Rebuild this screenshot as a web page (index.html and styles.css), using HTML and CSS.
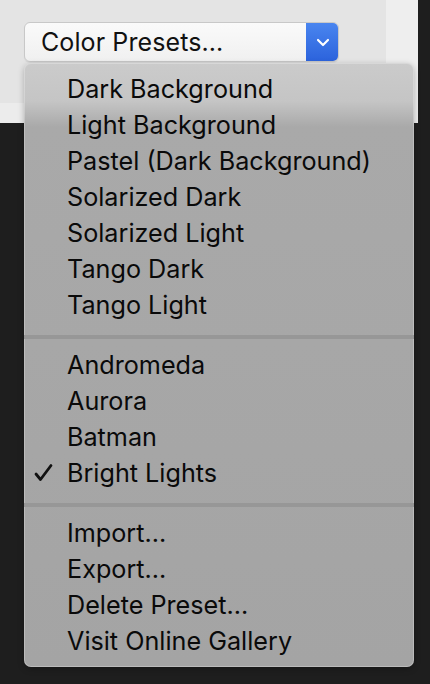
FILE: index.html
```html
<!DOCTYPE html>
<html>
<head>
<meta charset="utf-8">
<link rel="stylesheet" href="styles.css">
</head>
<body>
<div class="stage">
  <div class="panel">
    <div class="panel-main">
      <div class="popup">
        <span class="popup-label">Color Presets...</span>
        <span class="popup-arrow">
          <svg width="14" height="9" viewBox="0 0 14 9"><path d="M2 2 L7 7 L12 2" fill="none" stroke="#fff" stroke-width="2.2" stroke-linecap="round" stroke-linejoin="round"/></svg>
        </span>
      </div>
    </div>
    <div class="panel-side"></div>
  </div>

  <div class="menu">
    <div class="item">Dark Background</div>
    <div class="item">Light Background</div>
    <div class="item">Pastel (Dark Background)</div>
    <div class="item">Solarized Dark</div>
    <div class="item">Solarized Light</div>
    <div class="item">Tango Dark</div>
    <div class="item">Tango Light</div>
    <div class="sep"><div class="sep-line"></div></div>
    <div class="item">Andromeda</div>
    <div class="item">Aurora</div>
    <div class="item">Batman</div>
    <div class="item checked"><svg class="check" width="20" height="20" viewBox="0 0 20 20"><path d="M2 11 L6.5 16.5 L17 2.5" fill="none" stroke="#111" stroke-width="2.8" stroke-linecap="round" stroke-linejoin="round"/></svg>Bright Lights</div>
    <div class="sep"><div class="sep-line"></div></div>
    <div class="item">Import...</div>
    <div class="item">Export...</div>
    <div class="item">Delete Preset...</div>
    <div class="item">Visit Online Gallery</div>
  </div>
</div>
</body>
</html>
```

FILE: styles.css
```css
html, body {
  margin: 0;
  padding: 0;
}
body {
  background: #1e1e1e;
  font-family: Inter, "Liberation Sans", Arial, sans-serif;
  color: #111;
}
.stage {
  position: relative;
  width: 430px;
  height: 684px;
  overflow: hidden;
}
.panel {
  display: flex;
  width: 418px;
  height: 123px;
}
.panel-main {
  flex: 0 0 386px;
  background: linear-gradient(#e4e4e4 0, #e4e4e4 103px, #ececec 103px);
  padding: 22px 0 0 24px;
  box-sizing: border-box;
}
.panel-side {
  flex: 1;
  background: #eeeeee;
}
.popup {
  display: flex;
  width: 315px;
  height: 40px;
  box-sizing: border-box;
  border: 1px solid #c8c8c8;
  border-radius: 6px;
  background: linear-gradient(#fafafa, #f0f0f0);
  overflow: hidden;
  box-shadow: 0 1px 1px rgba(0,0,0,0.06);
}
.popup-label {
  flex: 1;
  display: flex;
  align-items: center;
  padding-left: 16px;
  font-size: 25px;
  letter-spacing: 0.1px;
  color: #111;
}
.popup-arrow {
  flex: 0 0 33px;
  display: flex;
  align-items: center;
  justify-content: center;
  background: linear-gradient(#4a86f0, #2b62dc);
  margin: -1px -1px -1px 0;
}
.menu {
  position: absolute;
  top: 63px;
  left: 24px;
  width: 390px;
  height: 604px;
  box-sizing: border-box;
  padding-top: 8px;
  border-radius: 7px;
  background: linear-gradient(#cbcbcb 0px, #c5c5c5 38px, #a9a9a9 64px, #a4a4a4 100%);
  box-shadow: 0 0 0 1px rgba(255,255,255,0.25) inset, 0 2px 6px rgba(0,0,0,0.25);
}
.item {
  position: relative;
  height: 36px;
  display: flex;
  align-items: center;
  padding-left: 43px;
  font-size: 25.2px;
  color: #0a0a0a;
  white-space: nowrap;
}
.check {
  position: absolute;
  left: 10px;
  top: 8px;
}
.sep {
  padding: 12px 0 8px;
}
.sep-line {
  height: 4px;
  background: #979797;
}
```
